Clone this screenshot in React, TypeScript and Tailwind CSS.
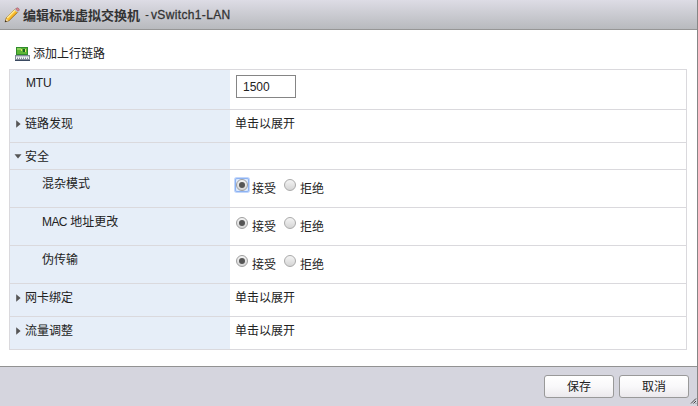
import React from "react";

function PencilIcon() {
  return (
    <svg width="16" height="16" viewBox="0 0 16 16" className="shrink-0">
      <path d="M1.2 14.8 2.2 11 10.8 2.2 13.8 5.2 5 13.8Z" fill="#fbc02f" stroke="#8a6420" strokeWidth=".7" />
      <path d="M3.2 11 11.1 3.1" stroke="#ffeb9c" strokeWidth="1.4" />
      <path d="M4.9 12.9 12.9 4.9" stroke="#dc951c" strokeWidth=".8" />
      <path d="M11.6 2 12.6 1Q13.6 .5 14.6 1.5T15 3.4L14 4.4Z" fill="#e0868e" stroke="#8b5660" strokeWidth=".6" />
      <path d="M10.8 2.4 13.6 5.2" stroke="#c2c6d0" strokeWidth="1.2" />
      <path d="M1.7 14.3 2.4 11.8 4.2 13.6Z" fill="#f5dfb8" />
      <path d="M.8 15.2 1.5 13.2 2.8 14.5Z" fill="#292421" />
    </svg>
  );
}

function AdapterIcon() {
  return (
    <svg width="16" height="14" viewBox="0 0 16 14" shapeRendering="crispEdges" className="-mt-0.5 shrink-0">
      <path d="M1 0h12v8H1z" fill="#2f8a2c" />
      <path d="M2 1h10v6H2z" fill="#5db636" />
      <path d="M2 1h4v2H2z" fill="#8bd05a" />
      <path d="M6 2h1v2H6zM10 2h1v3h-1z" fill="#e4e26b" />
      <path d="M8 2h2v3H8z" fill="#176328" />
      <path d="M0 8h15v5H0z" fill="#808996" />
      <path d="M1 9h13v2H1z" fill="#c4cad2" />
      <path d="M1 10h1v2H1zM3 10h1v2H3zM5 10h1v2H5zM7 10h1v2H7zM9 10h1v2H9zM11 10h1v2h-1zM13 10h1v2h-1z" fill="#f1f3f6" />
      <path d="M0 13h15v1H0z" fill="#3a4960" />
    </svg>
  );
}

function Arrow({ open }: { open: boolean }) {
  return open ? (
    <svg width="8" height="5" viewBox="0 0 8 5" className="-ml-0.5 -mt-0.5 shrink-0">
      <path d="M.5.2h7L4 4.6Z" fill="#555" />
    </svg>
  ) : (
    <svg width="5" height="8" viewBox="0 0 5 8" className="-mt-0.5 shrink-0">
      <path d="M.2.3v7.4L4.6 4Z" fill="#555" />
    </svg>
  );
}

function Radio({ checked = false, focused = false }: { checked?: boolean; focused?: boolean }) {
  return (
    <span
      className={`flex h-3 w-3 shrink-0 ${
        focused ? "rounded-[1px] bg-[#dbe8fd] shadow-[0_0_0_1px_#8db3f3,0_0_0_2px_#c3d7fa]" : ""
      }`}
    >
      <span
        className={`flex h-3 w-3 items-center justify-center rounded-full border bg-linear-to-b from-[#f4f4f4] to-[#d5d5d5] ${
          checked ? "border-[#9f9f9f]" : "border-[#aaa]"
        }`}
      >
        {checked && <span className="h-1.5 w-1.5 shrink-0 rounded-full bg-[#555]" />}
      </span>
    </span>
  );
}

function Choice({ focused = false }: { focused?: boolean }) {
  return (
    <div className="flex pl-px pt-[9px]">
      <Radio checked focused={focused} />
      <span className="ml-1 mt-[3px] w-6 leading-[15px]">接受</span>
      <span className="w-2" />
      <Radio />
      <span className="ml-1 mt-[3px] leading-[15px]">拒绝</span>
    </div>
  );
}

type RowProps = {
  height: string;
  label: React.ReactNode;
  state?: "open" | "closed";
  nested?: boolean;
  latin?: boolean;
  children?: React.ReactNode;
};

function Row({ height, label, state, nested = false, latin = false, children }: RowProps) {
  return (
    <div className={`flex border-b border-[#dad9dd] ${height}`}>
      <div className={`w-[220px] shrink-0 bg-[#e6eef8] pl-1.5 ${latin ? "pt-1.5" : "pt-[7px]"}`}>
        <div className="flex h-[15px] items-center">
          <span className="flex w-[9px] shrink-0 items-center">{state && <Arrow open={state === "open"} />}</span>
          <span className={`whitespace-nowrap leading-[15px] ${nested ? "pl-[17px]" : ""} ${latin ? "pl-px tracking-[-0.2px]" : ""}`}>
            {label}
          </span>
        </div>
      </div>
      <div className="grow pl-[5px]">{children}</div>
    </div>
  );
}

function Button({ children }: { children: React.ReactNode }) {
  return (
    <button className="flex h-[23px] w-[70px] items-center justify-center rounded-[3px] border border-[#999] bg-linear-to-b from-white via-[#f9f8fa] to-[#ebe9ed] pt-0.5 leading-[15px]">
      {children}
    </button>
  );
}

export default function App() {
  return (
    <div className="flex h-[406px] w-[698px] flex-col border-r border-[#858585] bg-white font-['Liberation_Sans','Noto_Sans_CJK_SC',sans-serif] text-[12px] text-[#222]">
      <header className="flex h-[30px] shrink-0 items-center border-b border-[#969696] bg-linear-to-b from-[#dddce5] to-[#b8babe] pl-1">
        <PencilIcon />
        <h1 className="ml-[3px] flex items-center whitespace-nowrap leading-[15px] text-[#333]">
          <span className="pt-0.5 text-[13px] font-bold">编辑标准虚拟交换机</span>
          <span className="ml-[5px] pt-px">-</span>
          <span className="ml-[2px] pt-px tracking-[0.35px] [-webkit-text-stroke:0.3px_#333]">vSwitch1-LAN</span>
        </h1>
      </header>
      <div className="flex h-[39px] shrink-0 items-center pl-[15px] pt-2.5">
        <AdapterIcon />
        <span className="ml-[2px] leading-[15px]">添加上行链路</span>
      </div>
      <main className="ml-[9px] w-[678px] shrink-0 border border-b-0 border-[#dad9dd]">
        <Row height="h-10" label="MTU" latin>
          <div className="pl-px pt-[5px]">
            <input defaultValue="1500" className="block h-[23px] w-[60px] border border-[#858585] bg-white px-1.5 outline-none" />
          </div>
        </Row>
        <Row height="h-[33px]" label="链路发现" state="closed">
          <div className="pt-[7px] leading-[15px]">单击以展开</div>
        </Row>
        <Row height="h-[27px]" label="安全" state="open" />
        <Row height="h-[38px]" label="混杂模式" nested>
          <Choice focused />
        </Row>
        <Row height="h-[38px]" label={<><span className="tracking-[-0.6px]">MAC</span> 地址更改</>} nested>
          <Choice />
        </Row>
        <Row height="h-[38px]" label="伪传输" nested>
          <Choice />
        </Row>
        <Row height="h-[33px]" label="网卡绑定" state="closed">
          <div className="pt-[7px] leading-[15px]">单击以展开</div>
        </Row>
        <Row height="h-[33px]" label="流量调整" state="closed">
          <div className="pt-[7px] leading-[15px]">单击以展开</div>
        </Row>
      </main>
      <footer className="mt-4 flex grow border-t border-[#929292] bg-[#d5d5de] pt-2">
        <div className="ml-auto flex gap-[5px]">
          <Button>保存</Button>
          <Button>取消</Button>
        </div>
        <svg width="8" height="8" viewBox="0 0 8 8" className="mb-px self-end">
          <path d="M2 6.5 7 1.5M4.5 6.5 7 4M6.5 7 7 6.5" stroke="#444" strokeWidth="1" />
        </svg>
      </footer>
    </div>
  );
}
